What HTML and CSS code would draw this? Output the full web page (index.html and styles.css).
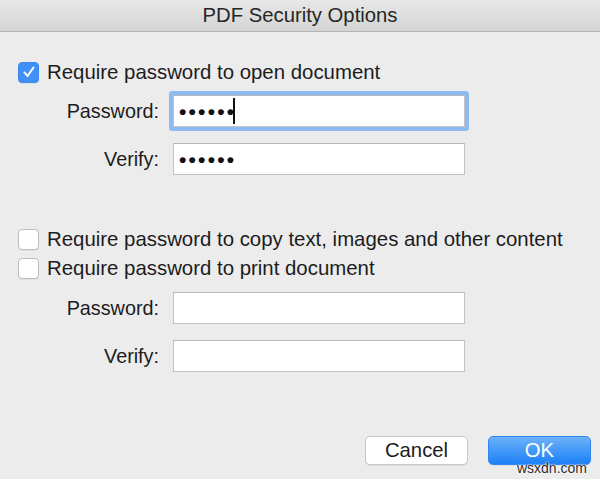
FILE: index.html
```html
<!DOCTYPE html>
<html lang="en">
<head>
  <meta charset="UTF-8">
  <title>PDF Security Options</title>
  <link rel="stylesheet" href="styles.css">
</head>
<body>

  <div class="dialog">
    <div class="titlebar">PDF Security Options</div>

    <div class="content">
      <label class="check-row">
        <span class="checkbox checked">
          <svg width="14" height="14" viewBox="0 0 14 14"><path d="M2.5 7.5 L5.6 11 L11.5 2.5" fill="none" stroke="#fff" stroke-width="2" stroke-linecap="round" stroke-linejoin="round"/></svg>
        </span>
        Require password to open document
      </label>

      <div class="fields first">
        <span class="label">Password:</span>
        <div class="field focused"><span class="dots">••••••</span><span class="caret"></span></div>
        <span class="label">Verify:</span>
        <div class="field"><span class="dots">••••••</span></div>
      </div>

      <label class="check-row spaced">
        <span class="checkbox"></span>
        Require password to copy text, images and other content
      </label>
      <label class="check-row next">
        <span class="checkbox"></span>
        Require password to print document
      </label>

      <div class="fields second">
        <span class="label">Password:</span>
        <div class="field"></div>
        <span class="label">Verify:</span>
        <div class="field"></div>
      </div>
    </div>

    <div class="buttons">
      <button class="btn">Cancel</button>
      <button class="btn primary">OK</button>
    </div>

    <span class="watermark">wsxdn.com</span>
  </div>

</body>
</html>
```

FILE: styles.css
```css
body {
  margin: 0;
  background: #ececec;
  font-family: "Liberation Sans", Helvetica, Arial, sans-serif;
  color: #1c1c1c;
}
.dialog {
  position: relative;
  width: 600px;
  height: 479px;
  display: flex;
  flex-direction: column;
}
.titlebar {
  height: 31px;
  border-bottom: 1px solid #b4b4b4;
  background: linear-gradient(#e8e8e8, #d4d4d4);
  display: flex;
  align-items: center;
  justify-content: center;
  font-size: 20.3px;
  color: #262626;
}
.content {
  padding: 30px 0 0 18px;
}
.check-row {
  display: flex;
  align-items: center;
  gap: 8px;
  height: 20px;
  font-size: 20.4px;
}
.check-row.spaced {
  margin-top: 54px;
}
.check-row.next {
  margin-top: 9px;
}
.checkbox {
  flex: none;
  width: 19px;
  height: 19px;
  border: 1px solid #bdbdbd;
  border-radius: 4px;
  background: #fff;
  box-shadow: 0 1px 0 rgba(0, 0, 0, 0.05);
  display: flex;
  align-items: center;
  justify-content: center;
}
.checkbox.checked {
  border-color: #3a89f0;
  background: #3f90f7;
}
.fields {
  display: grid;
  grid-template-columns: 141px 292px;
  column-gap: 14px;
  row-gap: 16px;
  align-items: center;
  font-size: 19.8px;
}
.fields.first {
  margin-top: 13px;
}
.fields.second {
  margin-top: 14px;
}
.label {
  text-align: right;
}
.field {
  box-sizing: border-box;
  height: 32px;
  background: #fff;
  border: 1px solid #c3c3c3;
  border-top-color: #b8b8b8;
  display: flex;
  align-items: center;
  padding-left: 5px;
}
.field.focused {
  box-shadow: 0 0 0 4px #8fbaf1;
  border-radius: 1px;
}
.dots {
  font-size: 21px;
  font-weight: bold;
  letter-spacing: 2.2px;
  color: #111;
  margin-top: 1px;
}
.caret {
  width: 0;
  height: 26px;
  border-left: 2px solid #111;
  margin-left: -3px;
}
.buttons {
  margin-top: auto;
  padding: 0 9px 14px 0;
  display: flex;
  justify-content: flex-end;
  gap: 20px;
}
.btn {
  width: 103px;
  height: 29px;
  border: 1px solid #c6c6c6;
  border-radius: 5px;
  background: #fff;
  font-family: inherit;
  font-size: 20.3px;
  color: #1c1c1c;
  padding: 0;
  box-shadow: 0 1px 0 rgba(0, 0, 0, 0.06);
}
.btn.primary {
  border-color: #2f86f0;
  background: linear-gradient(#6cb2fa, #1c80f6);
  color: #fff;
}
.watermark {
  position: absolute;
  right: 13px;
  bottom: 3px;
  font-size: 14px;
  color: #2a2a2a;
  text-shadow: 0 0 2px #fff, 0 0 2px #fff;
}
```
